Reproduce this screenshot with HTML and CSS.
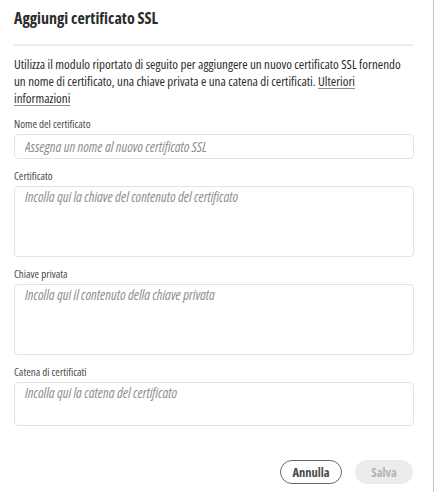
FILE: index.html
```html
<!DOCTYPE html>
<html lang="it">
<head>
<meta charset="utf-8">
<title>Aggiungi certificato SSL</title>
<link rel="stylesheet" href="styles.css">
</head>
<body>
<div class="dialog">
  <h1 class="title">Aggiungi certificato SSL</h1>
  <hr class="divider">
  <p class="intro">Utilizza il modulo riportato di seguito per aggiungere un nuovo certificato SSL fornendo un nome di certificato, una chiave privata e una catena di certificati. <a class="link" href="#">Ulteriori informazioni</a></p>
  <div class="field">
    <label class="label" for="name">Nome del certificato</label>
    <input class="input" id="name" type="text" placeholder="Assegna un nome al nuovo certificato SSL">
  </div>
  <div class="field">
    <label class="label" for="cert">Certificato</label>
    <textarea class="area area-tall" id="cert" placeholder="Incolla qui la chiave del contenuto del certificato"></textarea>
  </div>
  <div class="field">
    <label class="label" for="key">Chiave privata</label>
    <textarea class="area area-tall" id="key" placeholder="Incolla qui il contenuto della chiave privata"></textarea>
  </div>
  <div class="field">
    <label class="label" for="chain">Catena di certificati</label>
    <textarea class="area area-short" id="chain" placeholder="Incolla qui la catena del certificato"></textarea>
  </div>
  <div class="actions">
    <button class="btn btn-secondary" type="button">Annulla</button>
    <button class="btn btn-disabled" type="button" disabled>Salva</button>
  </div>
</div>
</body>
</html>
```
FILE: styles.css
```css
* { box-sizing: border-box; }
html, body { margin: 0; padding: 0; background: #fff; }
body {
  font-family: "Open Sans", Lato, sans-serif;
  font-stretch: 79%;
  color: #2c2c2c;
}

.dialog {
  width: 434px;
  min-height: 492px;
  padding: 7px 20px 0 14px;
  border-right: 1px solid #c4c4c4;
  display: flex;
  flex-direction: column;
}

.title {
  margin: 0;
  font-size: 16px;
  line-height: 22px;
  font-weight: 700;
  font-stretch: 76%;
  color: #2c2c2c;
}

.divider {
  margin: 15px 0 0;
  border: 0;
  height: 2px;
  background: #ececec;
}

.intro {
  margin: 10px 0 0;
  font-size: 13px;
  line-height: 17px;
  color: #2c2c2c;
}

.link {
  color: #2c2c2c;
  text-decoration: underline;
  text-decoration-color: #8e8e8e;
  text-decoration-thickness: 1px;
  text-underline-offset: 2px;
}

.field {
  display: flex;
  flex-direction: column;
  margin-top: 10px;
}

.label {
  font-size: 11px;
  line-height: 14px;
  color: #4b4b4b;
  margin-bottom: 3px;
}

.input, .area {
  width: 400px;
  border: 1px solid #e3e3e3;
  border-radius: 4px;
  font-family: "Open Sans", Lato, sans-serif;
  font-stretch: 79%;
  font-size: 14px;
  color: #2c2c2c;
  padding: 0 10px;
  background: #fff;
  outline: none;
  margin: 0;
}

.input { height: 25px; }

.area {
  resize: none;
  padding-top: 2px;
  line-height: 16px;
}
.area-tall { height: 71px; }
.area-short { height: 44px; }

.input::placeholder, .area::placeholder {
  color: #8e8e8e;
  font-style: italic;
  opacity: 1;
}

.actions {
  display: flex;
  justify-content: flex-end;
  gap: 13px;
  margin-top: 34px;
}

.btn {
  height: 24px;
  border-radius: 12px;
  font-family: "Open Sans", Lato, sans-serif;
  font-stretch: 78%;
  font-size: 12.5px;
  font-weight: 700;
  padding: 0;
}

.btn-secondary {
  width: 62px;
  border: 1.5px solid #6a6a6a;
  background: #fff;
  color: #4b4b4b;
}

.btn-disabled {
  width: 58px;
  border: 0;
  background: #ececec;
  color: #b3b3b3;
}
```
